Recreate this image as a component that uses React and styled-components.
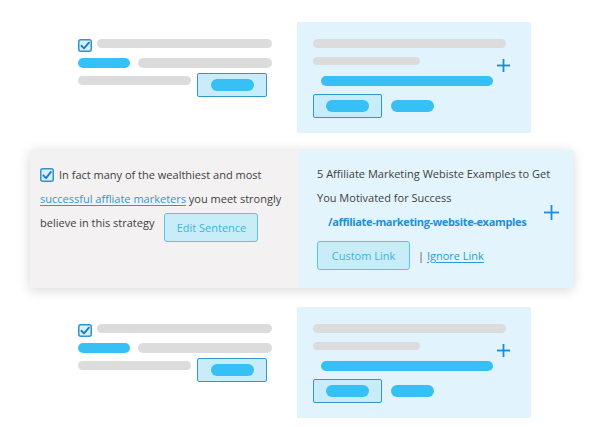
import React from "react";
import styled, { createGlobalStyle } from "styled-components";

const Global = createGlobalStyle`
  html, body { margin: 0; padding: 0; background: #ffffff; }
  body { font-family: "Open Sans", "Liberation Sans", sans-serif; }
`;

const Page = styled.div`
  width: 595px;
  height: 427px;
  box-sizing: border-box;
  padding-top: 22px;
  display: flex;
  flex-direction: column;
  overflow: hidden;
`;

/* ---------- skeleton rows ---------- */

const SkeletonRow = styled.div`
  display: grid;
  grid-template-columns: 297px 234px;
  height: 111px;
  flex: none;
  margin-bottom: ${(p) => p.$after || 0}px;
`;

const SkeletonLeft = styled.div`
  padding: 17px 25px 0 78px;
  display: flex;
  flex-direction: column;
`;

const SkeletonPanel = styled.div`
  background: #e1f4fd;
  padding: 17px 16px 0 16px;
  display: flex;
  flex-direction: column;
  align-items: flex-start;
`;

const Line = styled.div`
  display: flex;
  align-items: ${(p) => p.$align || "flex-start"};
  gap: ${(p) => p.$gap || 0}px;
  margin-top: ${(p) => p.$top || 0}px;
  align-self: stretch;
`;

const Bar = styled.div`
  height: ${(p) => p.$h || 9}px;
  width: ${(p) => (p.$w ? `${p.$w}px` : "auto")};
  flex: ${(p) => (p.$w ? "none" : "1")};
  border-radius: 6px;
  background: ${(p) => (p.$blue ? "#37c0f5" : "#dcdcdc")};
  margin-top: ${(p) => p.$top || 0}px;
  margin-left: ${(p) => p.$left || 0}px;
`;

const OutlineBox = styled.div`
  width: ${(p) => p.$w}px;
  height: 24px;
  box-sizing: border-box;
  border: 1px solid #3596cc;
  border-radius: 2px;
  background: #c9ecfa;
  display: flex;
  align-items: center;
  justify-content: center;
  flex: none;
`;

const PlusMark = styled.svg`
  flex: none;
  display: block;
  margin-left: auto;
  margin-right: ${(p) => p.$right || 0}px;
  margin-top: ${(p) => p.$top || 0}px;
`;

const Plus = ({ size = 13, color = "#1b8ccf", stroke = 1.8, ...rest }) => (
  <PlusMark width={size} height={size} viewBox={`0 0 ${size} ${size}`} {...rest}>
    <line x1={size / 2} y1="0" x2={size / 2} y2={size} stroke={color} strokeWidth={stroke} />
    <line x1="0" y1={size / 2} x2={size} y2={size / 2} stroke={color} strokeWidth={stroke} />
  </PlusMark>
);

const CheckSvg = styled.svg`
  flex: none;
  display: inline-block;
  vertical-align: ${(p) => p.$valign || "baseline"};
  margin-right: ${(p) => p.$right || 0}px;
`;

const Check = ({ w = 14, h = 13, ...rest }) => (
  <CheckSvg width={w} height={h} viewBox={`0 0 ${w} ${h}`} {...rest}>
    <rect x="0.75" y="0.75" width={w - 1.5} height={h - 1.5} rx="2" fill="#d6effb" stroke="#3193d0" strokeWidth="1.5" />
    <path
      d={`M${w * 0.24} ${h * 0.52} L${w * 0.43} ${h * 0.72} L${w * 0.78} ${h * 0.28}`}
      fill="none"
      stroke="#1f77bd"
      strokeWidth="1.8"
      strokeLinecap="round"
      strokeLinejoin="round"
    />
  </CheckSvg>
);

const Skeleton = ({ after }) => (
  <SkeletonRow $after={after}>
    <SkeletonLeft>
      <Line $gap={5}>
        <Check />
        <Bar $h={9} />
      </Line>
      <Line $gap={8} $top={6}>
        <Bar $blue $w={52} $h={10} />
        <Bar $h={10} />
      </Line>
      <Line $gap={6} $top={5}>
        <Bar $w={113} $h={9} $top={3} />
        <OutlineBox $w={70}>
          <Bar $blue $w={43} $h={12} />
        </OutlineBox>
      </Line>
    </SkeletonLeft>
    <SkeletonPanel>
      <Bar $w={193} $h={9} />
      <Line $top={9}>
        <Bar $w={107} $h={8} />
        <Plus $top={2} $right={5} />
      </Line>
      <Bar $blue $w={172} $h={10} $top={4} $left={8} />
      <Line $top={8} $gap={9} $align="center">
        <OutlineBox $w={69}>
          <Bar $blue $w={43} $h={12} />
        </OutlineBox>
        <Bar $blue $w={43} $h={12} />
      </Line>
    </SkeletonPanel>
  </SkeletonRow>
);

/* ---------- featured suggestion card ---------- */

const Card = styled.div`
  margin: 0 0 19px 30px;
  width: 543px;
  height: 138px;
  flex: none;
  display: grid;
  grid-template-columns: 269px 1fr;
  box-shadow: 0 2px 12px rgba(0, 0, 0, 0.16);
`;

const SentencePane = styled.div`
  background: #f3f1f1;
  padding: 13px 10px 0 10px;
  font-size: 11px;
  line-height: 24px;
  color: #3f3f3f;
`;

const TextLink = styled.a`
  color: #2a9bd6;
  text-decoration: underline;
  text-underline-offset: 2px;
  cursor: pointer;
`;

const SoftButton = styled.span`
  display: inline-block;
  box-sizing: border-box;
  width: ${(p) => p.$w}px;
  height: 29px;
  line-height: 27px;
  text-align: center;
  border: 1px solid #5cc4ea;
  border-radius: 3px;
  background: #c9ecf9;
  color: #3db4e2;
  font-size: 11px;
  vertical-align: ${(p) => p.$valign || "baseline"};
  margin-left: ${(p) => p.$left || 0}px;
`;

const TargetPane = styled.div`
  background: #e3f4fc;
  padding: 12px 14px 0 18px;
  display: grid;
  grid-template-columns: 1fr 15px;
  align-content: start;
  font-size: 11px;
  line-height: 24px;
  color: #3f3f3f;
`;

const Title = styled.div`
  grid-column: 1 / -1;
`;

const Slug = styled.div`
  padding-left: 11px;
  font-weight: 700;
  letter-spacing: -0.35px;
  color: #1f8fd6;
`;

const PlusSlot = styled.div`
  margin-top: -5px;
`;

const Actions = styled.div`
  grid-column: 1 / -1;
  display: flex;
  align-items: center;
  margin-top: 7px;
  gap: 8px;
`;

const Divider = styled.span`
  color: #555;
`;

export default function App() {
  return (
    <>
      <Global />
      <Page>
        <Skeleton after={17} />
        <Card>
          <SentencePane>
            <Check w={14} h={14} $valign="-3px" $right={5} />
            <span>In fact many of the wealthiest and most</span>{" "}
            <TextLink>successful affliate marketers</TextLink>{" "}
            <span>you meet strongly</span>{" "}
            <span>believe in this strategy</span>
            <SoftButton $w={94} $left={10} $valign="-5px">
              Edit Sentence
            </SoftButton>
          </SentencePane>
          <TargetPane>
            <Title>5 Affiliate Marketing Webiste Examples to Get You Motivated for Success</Title>
            <Slug>/affiliate-marketing-website-examples</Slug>
            <PlusSlot>
              <Plus size={15} color="#1e8fd6" />
            </PlusSlot>
            <Actions>
              <SoftButton $w={93}>Custom Link</SoftButton>
              <span>
                <Divider>|</Divider> <TextLink>Ignore Link</TextLink>
              </span>
            </Actions>
          </TargetPane>
        </Card>
        <Skeleton />
      </Page>
    </>
  );
}
